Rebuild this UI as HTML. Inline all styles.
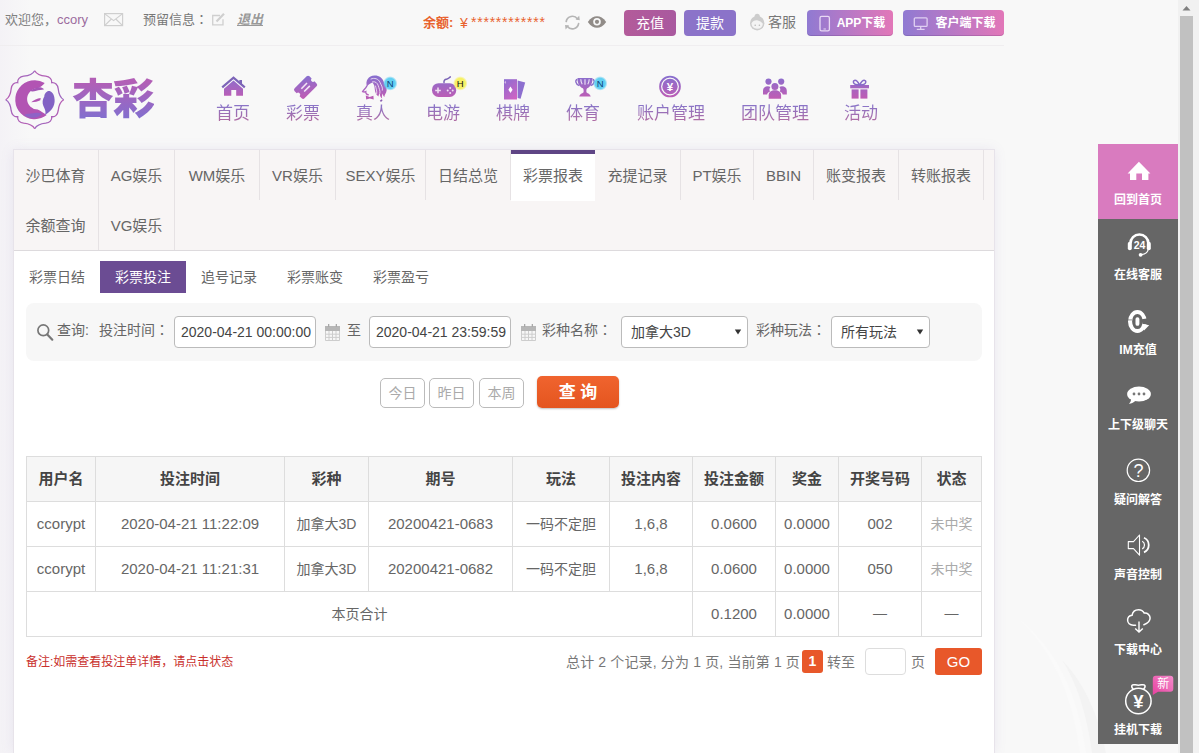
<!DOCTYPE html>
<html lang="zh-CN">
<head>
<meta charset="utf-8">
<title>彩票报表</title>
<style>
*{box-sizing:border-box;margin:0;padding:0}
html,body{width:1199px;height:753px;overflow:hidden}
body{position:relative;background:#f7f6f8;font-family:"Liberation Sans","Noto Sans CJK SC",sans-serif;font-size:14px;color:#666}
.abs{position:absolute}
a{color:inherit;text-decoration:none}
i.p{font-style:normal;font-family:"Liberation Sans","Noto Sans CJK TC",sans-serif}
/* background shading */
#bg{left:0;top:0;width:1178px;height:753px;background:
 linear-gradient(90deg,#f4f2f6 0,rgba(246,244,247,0) 30px),
 linear-gradient(180deg,#f8f8f8 0,#f8f8f8 100%)}
/* top bar */
#top{left:0;top:0;width:1004px;height:46px;border-bottom:1px solid #f0eef0}
#top span,#top a{position:absolute;white-space:nowrap;line-height:20px;font-size:13px;top:10px}
.btn{position:absolute;top:10px;height:26px;border-radius:4px;color:#fff;font-size:14px;line-height:26px;text-align:center;white-space:nowrap}
/* nav */
.nav{position:absolute;top:103px;height:22px;line-height:22px;font-size:17px;background:linear-gradient(180deg,#8b74c6 15%,#b46a9e 90%);-webkit-background-clip:text;background-clip:text;color:transparent;white-space:nowrap;text-align:center}
.nico{position:absolute}
/* panel */
#panel{left:13px;top:150px;width:981px;height:603px;background:#fff;box-shadow:0 0 12px rgba(125,100,180,.13)}
#pb{left:0;top:-1px;width:982px;height:605px;border:1px solid #e7e3ea;pointer-events:none}
#tabs{left:0;top:0;width:981px;height:101px;background:#f8f5f5;border-bottom:1px solid #dddadd}
.tab{position:absolute;height:50px;line-height:52px;font-size:15px;color:#666;text-align:center;border-right:1px solid #e6e2e4;white-space:nowrap}
.tab.on{background:#fff;border-top:4px solid #5f4585;line-height:44px;border-right:0}
.sub{position:absolute;top:111px;height:32px;line-height:32px;font-size:14px;color:#666;text-align:center;white-space:nowrap}
.sub.on{background:#6b4c93;color:#fff}
#search{left:13px;top:153px;width:956px;height:58px;background:#f7f7f7;border-radius:8px}
#search span{position:absolute;top:16px;line-height:22px;font-size:14px;color:#666;white-space:nowrap}
.inp{position:absolute;top:13px;height:32px;border:1px solid #bbb;border-radius:4px;background:#fff;font-size:14px;color:#444;line-height:30px;padding-left:6px;white-space:nowrap;overflow:hidden}
.qb{position:absolute;top:228px;height:30px;width:45px;border:1px solid #bbb;border-radius:5px;background:#fff;color:#aaa;font-size:14px;line-height:28px;text-align:center}
#go{position:absolute;left:524px;top:226px;width:82px;height:32px;border-radius:5px;background:linear-gradient(#f0642f,#e4551f);color:#fff;font-size:17px;font-weight:bold;line-height:34px;text-align:center;box-shadow:0 1px 2px rgba(0,0,0,.25)}
table{position:absolute;left:13px;top:306px;width:955px;border-collapse:collapse;table-layout:fixed}
td,th{border:1px solid #ddd;text-align:center;font-size:14px;color:#666;height:45px;font-weight:normal;white-space:nowrap;padding:0 0 2px}
td.n{font-size:15px;letter-spacing:0}
th{background:#f6f6f6;font-weight:bold;color:#444;font-size:15px;letter-spacing:0;padding-bottom:3px}
td.g{color:#aaa}
/* sidebar */
#side{left:1098px;top:144px;width:80px;height:600px;background:#666}
.si{position:absolute;left:0;width:80px;height:75px}
.si b{position:absolute;left:0;width:80px;top:47px;text-align:center;font-size:12px;line-height:18px;color:#fff;font-weight:bold;white-space:nowrap}
.si svg{position:absolute}
/* scrollbar */
#sb{left:1178px;top:0;width:21px;height:753px;background:#f1f1f1}
#sb i{position:absolute;left:2px;top:16px;width:13px;height:737px;background:#c1c1c1}
</style>
</head>
<body>
<div id="bg" class="abs"></div>
<svg class="abs" style="left:1000px;top:560px" width="178" height="193" viewBox="0 0 178 193"><path d="M62 100c14 22 24 50 30 93h14c-8-40-22-70-44-93z" fill="#f3f3f3"/><path d="M20 60c30 30 52 70 60 133h6c-8-60-30-104-66-133z" fill="#fafafa"/></svg>

<div id="top" class="abs">
 <span style="left:5px;color:#808080">欢迎您，<em style="font-style:normal;color:#9c6c9e">ccory</em></span>
 <span style="left:143px;color:#777">预留信息<i class="p" lang="zh-TW">：</i></span>
 <a style="left:237px;color:#999;font-style:italic;font-weight:bold;text-decoration:underline">退出</a>
 <span style="left:423px;top:13px;color:#e8622e;font-weight:bold">余额:</span>
 <span style="left:460px;top:13px;color:#e8622e;font-size:14px">¥</span>
 <span style="left:471px;top:12px;color:#e8622e;font-size:14px;letter-spacing:.77px">************</span>
 <div class="btn" style="left:624px;width:52px;background:linear-gradient(90deg,#b35b9a,#a9599f)">充值</div>
 <div class="btn" style="left:684px;width:52px;background:#8b73c9">提款</div>
 <span style="left:768px;top:12px;color:#777;font-size:14px">客服</span>
 <div class="btn" style="left:807px;width:86px;background:linear-gradient(90deg,#907ad2,#e277b8);font-size:12px;font-weight:bold;padding-left:22px;box-shadow:inset 0 -1px 0 rgba(60,30,90,.18)">APP下载</div>
 <div class="btn" style="left:903px;width:101px;background:linear-gradient(90deg,#907ad2,#e277b8);font-size:12px;font-weight:bold;padding-left:24px;box-shadow:inset 0 -1px 0 rgba(60,30,90,.18)">客户端下载</div>
</div>

<div id="nav" class="abs" style="left:0;top:0">
 <div class="nav" style="left:216px;width:34px">首页</div>
 <div class="nav" style="left:286px;width:34px">彩票</div>
 <div class="nav" style="left:356px;width:34px">真人</div>
 <div class="nav" style="left:426px;width:34px">电游</div>
 <div class="nav" style="left:496px;width:34px">棋牌</div>
 <div class="nav" style="left:566px;width:34px">体育</div>
 <div class="nav" style="left:637px;width:68px">账户管理</div>
 <div class="nav" style="left:741px;width:68px">团队管理</div>
 <div class="nav" style="left:844px;width:34px">活动</div>
</div>

<svg class="abs" style="left:0;top:0" width="1010" height="140" viewBox="0 0 1010 140">
 <defs>
  <linearGradient id="g1" gradientUnits="userSpaceOnUse" x1="0" y1="75" x2="0" y2="100"><stop offset="0" stop-color="#8570d0"/><stop offset="1" stop-color="#c35bb2"/></linearGradient>
  <linearGradient id="g2" gradientUnits="userSpaceOnUse" x1="0" y1="-28" x2="0" y2="28"><stop offset="0" stop-color="#b65fb4"/><stop offset="1" stop-color="#8272cc"/></linearGradient>
  <linearGradient id="g3" gradientUnits="userSpaceOnUse" x1="500" y1="78" x2="520" y2="100"><stop offset="0" stop-color="#7f6fd4"/><stop offset="1" stop-color="#dc62c0"/></linearGradient>
  <linearGradient id="g4" x1="1" y1="0" x2="0" y2="1"><stop offset="0" stop-color="#8570d0"/><stop offset="1" stop-color="#c35bb2"/></linearGradient>
  <radialGradient id="bn"><stop offset="0.7" stop-color="#62d0f2"/><stop offset="1" stop-color="#62d0f2" stop-opacity="0"/></radialGradient>
  <radialGradient id="bh"><stop offset="0.7" stop-color="#f6f166"/><stop offset="1" stop-color="#f6f166" stop-opacity="0"/></radialGradient>
 </defs>
 <!-- mail -->
 <g fill="none" stroke="#cfcfcf" stroke-width="1.2"><rect x="104.6" y="13.6" width="18" height="12"/><path d="M104.6 13.6l9 7 9-7M104.6 25.6l6.8-6.6M122.6 25.6l-6.8-6.6"/></g>
 <!-- edit -->
 <g fill="none" stroke="#cfcfcf" stroke-width="1.3"><path d="M220 15.5h-7.3v9.3h10.3v-5.5"/><path d="M216.5 21.5l7.5-7.8" stroke-width="2.2"/></g>
 <!-- refresh -->
 <g fill="none" stroke="#b5b5b5" stroke-width="1.7" stroke-linecap="round"><path d="M566.2 21.5a6.3 6.3 0 0 1 11.3-2.6"/><path d="M578.6 23.7a6.3 6.3 0 0 1-11.3 2.6"/></g>
 <path d="M575.6 19.6l4.2.6-.6-4.4zM569.2 25.6l-4.2-.6.6 4.4z" fill="#b5b5b5"/>
 <!-- eye -->
 <path d="M587.8 22c3-4.2 6-5.8 9.2-5.8s6.200 1.600 9.200 5.800c-3 4.200-6 5.800-9.200 5.800s-6.200-1.600-9.200-5.800z" fill="#918c88"/>
 <circle cx="597" cy="21.800" r="3.800" fill="#f8f8f8"/><circle cx="597" cy="21.800" r="2.100" fill="#918c88"/>
 <!-- service head -->
 <g fill="#cdcdcd"><circle cx="757.2" cy="23.200" r="7.200"/><circle cx="757.200" cy="16.400" r="2.600"/></g>
 <path d="M751.400 23.500c1.500-2.800 4-3.600 6.500-3 1.700.4 3.400 1.400 5 3.200a5.800 5.800 0 0 1-11.500-.2z" fill="#f4f4f4"/>
 <circle cx="755.200" cy="25.200" r=".8" fill="#bbb"/><circle cx="759.400" cy="25.200" r=".8" fill="#bbb"/>
 <!-- logo emblem -->
 <g transform="translate(34.700 99.700)" fill="none" stroke="url(#g2)" stroke-width="1.300">
  <path id="q" d="M0,-29C2,-25.500 6,-24 11,-23.500C15,-23 17.500,-20.500 17,-17C20.500,-17.500 23,-15 23.500,-11C24,-6 25.500,-2 29,0"/>
  <use href="#q" transform="rotate(90)"/><use href="#q" transform="rotate(180)"/><use href="#q" transform="rotate(270)"/>
 </g>
 <g transform="translate(34.700 99.700)">
  <path d="M10,-16.800A19.500,19.500 0 1 0 12,15.400C9,13.500 5.500,10.800 3,9.800A10.600,10.600 0 0 1 3,-11.400C6,-12.800 8.500,-14.800 10,-16.800Z" fill="#b254b3"/>
  <path d="M6,-1.600C2.500,-1 -1,0.300 -3.500,2.600C0,2.600 3.500,1.800 5.600,0.600Z" fill="#b254b3"/>
  <path d="M12.500,-8.200C15.500,-9.600 18.600,-7 19.600,-2.500C21,4 18.500,10.500 10.500,15C11.500,11.500 10,9 8.600,6C7.400,3 7.800,-0.500 9.600,-3.200C9.600,-5.200 10.600,-7.200 12.500,-8.200Z" fill="#8262c4"/>
  <path d="M-4.800,-8.600c1.500,-2.200 3.800,-1.800 5.300,-2.800c2.400,-1.600 6.800,-1.400 9,1c-2.600,1.200 -5.600,.6 -7.800,1.400c-2.200,.8 -4.500,1.200 -6.500,.4z" fill="#a456b6"/>
  <path d="M-10.500,15.200c3,-1.800 6.400,-.8 8.600,-1.600c2.800,-1 6.400,-.8 9.400,.6c-3.400,3.200 -8,4.400 -12.400,3.600c-2.200,-.4 -4.200,-1.400 -5.600,-2.600z" fill="#8e63c6"/>
 </g>
 <!-- home -->
 <path d="M222.200 87.300L233.500 77.600L244.800 87.300" fill="none" stroke="#7c64b8" stroke-width="2.200" stroke-linejoin="miter"/>
 <path d="M239.300 80h2.700v4.800l-2.700-2.300z" fill="#7c64b8"/>
 <path d="M233.500 80.600L243 88.700V95.700H236.200V90H231.300V95.700H224V88.700Z" fill="url(#g1)"/>
 <!-- ticket -->
 <g transform="translate(305.600 87.300) rotate(-45)">
  <path d="M-10.500,-5a2,2 0 0 1 2,-2h17a2,2 0 0 1 2,2v3a2,2 0 0 0 0,4v3a2,2 0 0 1 -2,2h-17a2,2 0 0 1 -2,-2v-3a2,2 0 0 0 0,-4z" fill="url(#g4)"/>
  <path d="M-4,-2h8M-4,2h8" stroke="#f3e6f6" stroke-width="1.600"/>
 </g>
 <!-- lady -->
 <path d="M367 86.500c-2-5.500 1.500-10.800 7.500-10.900 4.800-.1 8 2.600 9.300 6.400 1 3 3.200 4.800 2.800 8.400-.3 2.800-2.400 4.200-2.200 6.600-1.200-1-1.600-2.200-1.400-3.600-1 1.400-1.400 3-.8 5-1.800-1.200-2.600-3-2.200-5.200-1 .8-1.600 2-1.400 3.400-2.400-1.600-3.600-4.400-3.800-7.200-.2-2.600-.6-5-2.400-6.800-2 .8-3.800 2-5.400 3.900z" fill="url(#g1)"/>
 <g fill="none" stroke="#f6eef8" stroke-width=".8" stroke-linecap="round">
  <path d="M371 79c3.500-1.600 7.500-.2 9 3.400 1 2.600 3 4.600 2.400 7.800"/>
  <path d="M372.500 81.800c3-.6 5 1.200 5.800 4 .7 2.600 2 4.600 1.600 7.400"/>
  <path d="M375.500 86c.6 2.800 1.600 5 1.200 7.600"/>
 </g>
 <g fill="none" stroke="url(#g1)" stroke-linecap="round">
  <path d="M366.800 86c-1 2.600-3.200 3.800-4.200 5.600 1.200.6 2.400.4 3.200 0-.2 1.600.8 3 2.600 3.200" stroke-width="1.300"/>
 </g>
 <path d="M365.800 95.500l3.800 1.500 3.800-1.200.3 3.600-3.900-.9-3.600 1z" fill="#b85cb4"/>
 <path d="M379.800 100.800l1.800-1.600 1 1-1.600 1.800z" fill="#8a5cb0"/>
 <circle cx="390.200" cy="83.400" r="7.300" fill="url(#bn)"/>
 <!-- gamepad -->
 <rect x="432" y="83.200" width="24.200" height="13.800" rx="6.500" fill="url(#g1)"/>
 <path d="M444 82.500c-.3-2.200.8-3 2.400-3.200 1.700-.2 2.300-1 3.900-2.400" fill="none" stroke="#7a63b6" stroke-width="1.500" stroke-linecap="round"/>
 <path d="M435.200 90.400h5.600M438 87.600v5.600" stroke="#f0dff2" stroke-width="1.500"/>
 <g fill="#f0dff2"><circle cx="450.200" cy="87.900" r="1"/><circle cx="450.200" cy="92.900" r="1"/><circle cx="447.700" cy="90.400" r="1"/><circle cx="452.700" cy="90.400" r="1"/></g>
 <circle cx="460.300" cy="83.400" r="7.300" fill="url(#bh)"/>
 <!-- cards -->
 <path d="M517.600 80.600l7.600 1.900-4.600 16.200-3-.8z" fill="#8d6fcf"/>
 <path d="M504 79.200h13v20.300h-13z" fill="url(#g3)"/>
 <path d="M510.500 86.500l2.100 3.200-2.100 3.200-2.100-3.200z" fill="#fff"/>
 <path d="M505.300 80.700l.9 1.600-.9 1.600-.9-1.600z" fill="#f3dcf3" opacity=".7"/>
 <!-- trophy -->
 <path d="M577.500 78h15c.2 5.200-2 9-5.300 10.200-.7.300-.9 1.600-.8 3.800.1 1.300 3.800 1.400 4.300 4.500h-11.400c.5-3.100 4.200-3.200 4.300-4.500.1-2.200-.1-3.500-.8-3.800-3.300-1.200-5.500-5-5.300-10.200z" fill="url(#g1)"/>
 <path d="M577.300 79.500c-2.400.2-2 4.700 2 6.200M592.700 79.500c2.400.2 2 4.700-2 6.200" fill="none" stroke="#8a6cc8" stroke-width="1.400"/>
 <path d="M580.800 79.300c.1 2.200.6 3.800 1.400 5M585 79.300v5.400M589.200 79.300c-.1 2.200-.6 3.800-1.400 5" stroke="#f1e6f6" stroke-width="1.100" fill="none"/>
 <circle cx="600.200" cy="83.400" r="7.300" fill="url(#bn)"/>
 <!-- coin -->
 <circle cx="670" cy="86.500" r="9.900" fill="none" stroke="url(#g1)" stroke-width="1.900"/>
 <circle cx="670" cy="86.500" r="7.700" fill="url(#g1)"/>
 <!-- team -->
 <g fill="url(#g1)">
  <circle cx="768.500" cy="81.600" r="3.100"/><circle cx="781.200" cy="81.600" r="3.100"/>
  <path d="M763 94.400v-3.600c0-3 2-4.600 4.800-4.600 1 0 1.900.2 2.600.7-1.200 1.500-1.200 3-.3 4.500-1.700 .6-2.700 1.700-3 3z"/>
  <path d="M786.800 94.400v-3.600c0-3-2-4.600-4.800-4.600-1 0-1.900.2-2.600.7 1.200 1.500 1.200 3 .3 4.500 1.700 .6 2.700 1.700 3 3z"/>
  <circle cx="774.900" cy="86.400" r="3.500"/>
  <path d="M768.700 98.700v-3.500c0-3.300 2.800-5 6.200-5s6.200 1.700 6.200 5v3.500z"/>
 </g>
 <!-- gift -->
 <g fill="url(#g1)"><rect x="850.200" y="85" width="18.800" height="3.300"/><rect x="851.600" y="89.400" width="7" height="9.200"/><rect x="860.400" y="89.400" width="7" height="9.200"/></g>
 <path d="M859.500 85c-1.500-3-3.200-5-5-4.600-1.600.4-1.500 2.800.3 3.700 1.200.6 3 .9 4.700.9zM859.700 85c1.500-3 3.200-5 5-4.600 1.600.4 1.500 2.800-.3 3.700-1.200.6-3 .9-4.700.9z" fill="none" stroke="#866bc8" stroke-width="1.500"/>
 <!-- phone -->
 <rect x="820" y="16.300" width="9.400" height="14.600" rx="1.600" fill="none" stroke="#e8d8f4" stroke-width="1.300"/><path d="M823.500 29h2.400" stroke="#e8d8f4" stroke-width="1"/>
 <!-- monitor -->
 <rect x="914.300" y="17.800" width="12.800" height="8.600" rx="1" fill="none" stroke="#e0d0f2" stroke-width="1.300"/><path d="M920.700 26.500v2.500M916.800 29.300h7.800" stroke="#e0d0f2" stroke-width="1.300"/>

 <g font-family="Liberation Sans, sans-serif" text-anchor="middle">
  <text x="390.200" y="86.800" font-size="9.500" fill="#0c3f7a">N</text>
  <text x="460.300" y="86.800" font-size="9.500" fill="#111">H</text>
  <text x="600.200" y="86.800" font-size="9.500" fill="#0c3f7a">N</text>
  <text x="670" y="90.600" font-size="11.500" font-weight="bold" fill="#fff">¥</text>
 </g>
</svg>

<div class="abs" id="logotxt" style="left:72px;top:70px;font-size:42px;line-height:60px;font-weight:900;letter-spacing:-1px;white-space:nowrap;background:linear-gradient(180deg,#b25fb6 20%,#7f70d0 85%);-webkit-background-clip:text;background-clip:text;color:transparent">杏彩</div>
<div id="panel" class="abs">
 <div id="tabs" class="abs">
  <div class="tab" style="left:0;top:0;width:86px">沙巴体育</div>
  <div class="tab" style="left:86px;top:0;width:76px">AG娱乐</div>
  <div class="tab" style="left:162px;top:0;width:85px">WM娱乐</div>
  <div class="tab" style="left:247px;top:0;width:76px">VR娱乐</div>
  <div class="tab" style="left:323px;top:0;width:90px">SEXY娱乐</div>
  <div class="tab" style="left:413px;top:0;width:85px">日结总览</div>
  <div class="tab on" style="left:498px;top:0;width:84px;height:51px">彩票报表</div>
  <div class="tab" style="left:582px;top:0;width:86px">充提记录</div>
  <div class="tab" style="left:668px;top:0;width:73px">PT娱乐</div>
  <div class="tab" style="left:741px;top:0;width:60px">BBIN</div>
  <div class="tab" style="left:801px;top:0;width:85px">账变报表</div>
  <div class="tab" style="left:886px;top:0;width:85px">转账报表</div>
  <div class="tab" style="left:0;top:50px;width:86px">余额查询</div>
  <div class="tab" style="left:86px;top:50px;width:76px">VG娱乐</div>
 </div>
 <div class="sub" style="left:16px;width:56px">彩票日结</div>
 <div class="sub on" style="left:87px;width:86px">彩票投注</div>
 <div class="sub" style="left:188px;width:56px">追号记录</div>
 <div class="sub" style="left:274px;width:56px">彩票账变</div>
 <div class="sub" style="left:360px;width:56px">彩票盈亏</div>

 <div id="search" class="abs">
  <span style="left:31px">查询:</span>
  <span style="left:73px">投注时间<i class="p" lang="zh-TW">：</i></span>
  <div class="inp" style="left:148px;width:142px">2020-04-21 00:00:00</div>
  <span style="left:321px">至</span>
  <div class="inp" style="left:343px;width:142px">2020-04-21 23:59:59</div>
  <span style="left:516px">彩种名称<i class="p" lang="zh-TW">：</i></span>
  <div class="inp" style="left:595px;width:127px;padding-left:9px">加拿大3D</div>
  <span style="left:730px">彩种玩法<i class="p" lang="zh-TW">：</i></span>
  <div class="inp" style="left:805px;width:99px;padding-left:9px">所有玩法</div>
<svg class="abs" style="left:0;top:0" width="956" height="58" viewBox="0 0 956 58">
 <circle cx="17.300" cy="27.300" r="5.400" fill="none" stroke="#777" stroke-width="1.700"/><path d="M21.300 31.500l5 5.200" stroke="#777" stroke-width="2.200" stroke-linecap="round"/>
 <g transform="translate(299 0)"><rect x="0" y="23" width="15" height="5" fill="#b6b6b6"/><rect x="3" y="21" width="1.300" height="3" fill="#a8a8a8"/><rect x="10.700" y="21" width="1.300" height="3" fill="#a8a8a8"/><path d="M.5 28v9.500h14v-9.500M4 28v9.500M7.500 28v9.500M11 28v9.500M.5 31.200h14M.5 34.400h14" fill="none" stroke="#cdcdcd" stroke-width="1"/></g><g transform="translate(495 0)"><rect x="0" y="23" width="15" height="5" fill="#b6b6b6"/><rect x="3" y="21" width="1.300" height="3" fill="#a8a8a8"/><rect x="10.700" y="21" width="1.300" height="3" fill="#a8a8a8"/><path d="M.5 28v9.500h14v-9.500M4 28v9.500M7.500 28v9.500M11 28v9.500M.5 31.200h14M.5 34.400h14" fill="none" stroke="#cdcdcd" stroke-width="1"/></g>
 <path d="M708.800 26.500h6.400l-3.200 5z" fill="#333"/><path d="M890.800 26.500h6.400l-3.200 5z" fill="#333"/>
</svg>
 </div>
 <div class="qb" style="left:367px">今日</div>
 <div class="qb" style="left:416px">昨日</div>
 <div class="qb" style="left:466px">本周</div>
 <div id="go">查 询</div>

 <table>
  <colgroup><col style="width:69px"><col style="width:189px"><col style="width:84px"><col style="width:144px"><col style="width:97px"><col style="width:83px"><col style="width:83px"><col style="width:63px"><col style="width:83px"><col style="width:60px"></colgroup>
  <tr><th>用户名</th><th>投注时间</th><th>彩种</th><th>期号</th><th>玩法</th><th>投注内容</th><th>投注金额</th><th>奖金</th><th>开奖号码</th><th>状态</th></tr>
  <tr><td class="n">ccorypt</td><td class="n">2020-04-21 11:22:09</td><td>加拿大3D</td><td class="n">20200421-0683</td><td>一码不定胆</td><td class="n">1,6,8</td><td class="n">0.0600</td><td class="n">0.0000</td><td class="n">002</td><td class="g">未中奖</td></tr>
  <tr><td class="n">ccorypt</td><td class="n">2020-04-21 11:21:31</td><td>加拿大3D</td><td class="n">20200421-0682</td><td>一码不定胆</td><td class="n">1,6,8</td><td class="n">0.0600</td><td class="n">0.0000</td><td class="n">050</td><td class="g">未中奖</td></tr>
  <tr><td colspan="6">本页合计</td><td class="n">0.1200</td><td class="n">0.0000</td><td>—</td><td>—</td></tr>
 </table>

 <div class="abs" style="left:13px;top:503px;font-size:12px;line-height:18px;color:#c9302c;white-space:nowrap">备注:如需查看投注单详情，请点击状态</div>
 <div class="abs" style="left:553px;top:501px;font-size:14px;line-height:22px;color:#777;white-space:nowrap;letter-spacing:.15px">总计 2 个记录, 分为 1 页, 当前第 1 页</div>
 <div class="abs" style="left:789px;top:500px;width:21px;height:23px;border-radius:3px;background:#e8582a;color:#fff;font-weight:bold;font-size:14px;line-height:23px;text-align:center">1</div>
 <div class="abs" style="left:814px;top:501px;font-size:14px;line-height:22px;color:#777">转至</div>
 <div class="abs" style="left:852px;top:498px;width:41px;height:27px;border:1px solid #ddd;border-radius:4px;background:#fff"></div>
 <div class="abs" style="left:898px;top:501px;font-size:14px;line-height:22px;color:#777">页</div>
 <div class="abs" style="left:922px;top:498px;width:47px;height:27px;border-radius:3px;background:#e8582a;color:#fff;font-size:15px;line-height:27px;text-align:center">GO</div>
 <div id="pb" class="abs"></div>
</div>

<div id="side" class="abs">
 <div class="si" style="top:0;background:#d97bbf"><b>回到首页</b></div>
 <div class="si" style="top:75px"><b>在线客服</b></div>
 <div class="si" style="top:150px"><b>IM充值</b></div>
 <div class="si" style="top:225px"><b>上下级聊天</b></div>
 <div class="si" style="top:300px"><b>疑问解答</b></div>
 <div class="si" style="top:375px"><b>声音控制</b></div>
 <div class="si" style="top:450px"><b>下载中心</b></div>
 <div class="si" style="top:525px"><b style="top:52px">挂机下载</b></div>
<svg class="abs" style="left:0;top:0" width="80" height="600" viewBox="0 0 80 600">
 <defs><linearGradient id="gn" x1="0" y1="1" x2="1" y2="0"><stop offset="0" stop-color="#e6409e"/><stop offset="1" stop-color="#f48ccc"/></linearGradient></defs>
 <!-- home -->
 <path d="M40.900 17.800L52.400 29.600H50.400V36H44V29.600H38.300V36H32V29.600H29.600Z" fill="#fff"/>
 <!-- headset -->
 <g fill="none" stroke="#fff">
  <path d="M32.400 99.500a9 9 0 0 1 18 0" stroke-width="2.600"/>
  <path d="M50.400 104.500c-.4 3.500-3 5.800-7 6.200" stroke-width="1.300"/>
 </g>
 <rect x="29.800" y="97.800" width="4" height="8.400" rx="2" fill="#fff"/><rect x="48.800" y="97.800" width="4" height="8.400" rx="2" fill="#fff"/>
 <circle cx="42.600" cy="110.800" r="1.900" fill="#fff"/>
 <text x="41.400" y="105" font-family="Liberation Sans, sans-serif" font-size="10.500" font-weight="bold" fill="#fff" text-anchor="middle" letter-spacing="-.2">24</text>
 <!-- IM -->
 <path fill="#fff" fill-rule="evenodd" d="M30,177.500a9.400,11.400 0 1 0 18.800,0a9.400,11.400 0 1 0 -18.800,0zM34.100,177.500a5.300,7.600 0 1 0 10.600,0a5.300,7.600 0 1 0 -10.600,0z"/>
 <path fill="#666" d="M43.500,175.300L50.500,174.300L50.500,180.600L44.500,180.300z"/>
 <path fill="#fff" d="M44.300,179.800L51.200,181.300L46,186.500z"/>
 <rect x="37.500" y="173.200" width="3.900" height="8.600" rx="1.900" fill="#fff"/>
 <path stroke="#666" stroke-width=".7" d="M29.800,175.900h4.300"/>
 <!-- chat -->
 <ellipse cx="41" cy="250" rx="11.900" ry="7.600" fill="#fff"/>
 <path d="M33 254.500c.3 2.300-.6 4-2.200 5.200 3-.1 5.300-1.200 6.800-3.200z" fill="#fff"/>
 <g fill="#777"><circle cx="36" cy="250" r="1.400"/><circle cx="41" cy="250" r="1.400"/><circle cx="46" cy="250" r="1.400"/></g>
 <!-- question -->
 <circle cx="40.400" cy="326.300" r="11.200" fill="none" stroke="#fff" stroke-width="1.200"/>
 <text x="40.400" y="332.600" font-family="Liberation Sans, sans-serif" font-size="18" fill="#fff" text-anchor="middle">?</text>
 <!-- speaker -->
 <path d="M30.300 397.600h5.200l6-6.600v20.200l-6-6.600h-5.200z" fill="none" stroke="#fff" stroke-width="1.100" stroke-linejoin="round"/>
 <path d="M44.200 397.300a4.300 4.300 0 0 1 0 7.600" fill="none" stroke="#fff" stroke-width="1.200"/>
 <path d="M46 393.800a8 8 0 0 1 0 14.600" fill="none" stroke="#fff" stroke-width="1.800"/>
 <!-- cloud -->
 <path d="M37.500 481.200h-2.200c-3.400 0-5.700-2.300-5.700-5.100 0-2.600 1.900-4.600 4.500-4.900.5-3.400 3.300-5.500 6.500-5.500 2.500 0 4.600 1.300 5.700 3.400 3.300-.3 5.800 2 5.800 4.900 0 3.200-2.600 5.400-6.200 6.700" fill="none" stroke="#fff" stroke-width="1.500" stroke-linecap="round"/>
 <path d="M41 477.500v10M37.200 484.500l3.800 3.600 3.800-3.600" fill="none" stroke="#fff" stroke-width="1.400"/>
 <!-- money bag -->
 <circle cx="40.400" cy="557" r="12.700" fill="none" stroke="#fff" stroke-width="1.500"/>
 <path d="M35.300 545.300c-1.200-1.200-2-2.700-1.300-3.900 1-1.600 3.200-.2 6.400-.2s5.400-1.400 6.400.2c.7 1.200-.1 2.700-1.300 3.900" fill="none" stroke="#fff" stroke-width="1.500"/>
 <text x="40.400" y="563.600" font-family="Liberation Sans, sans-serif" font-size="18.500" font-weight="bold" fill="#fff" text-anchor="middle">¥</text>
 <!-- new badge -->
 <path d="M57.800 531.700h14.500a3 3 0 0 1 3 3v10a3 3 0 0 1 -3 3h-12.300l-5.200 3.200v-16.200a3 3 0 0 1 3-3z" fill="url(#gn)"/>
 <text x="65.200" y="544.200" font-family="Liberation Sans, Noto Sans CJK SC, sans-serif" font-size="12" fill="#fff" text-anchor="middle">新</text>
</svg>
</div>

<div id="sb" class="abs"><i></i><svg class="abs" style="left:0;top:0" width="21" height="16"><path d="M4.500 10.500l4-4.500 4 4.500z" fill="#808080"/></svg></div>
</body>
</html>
